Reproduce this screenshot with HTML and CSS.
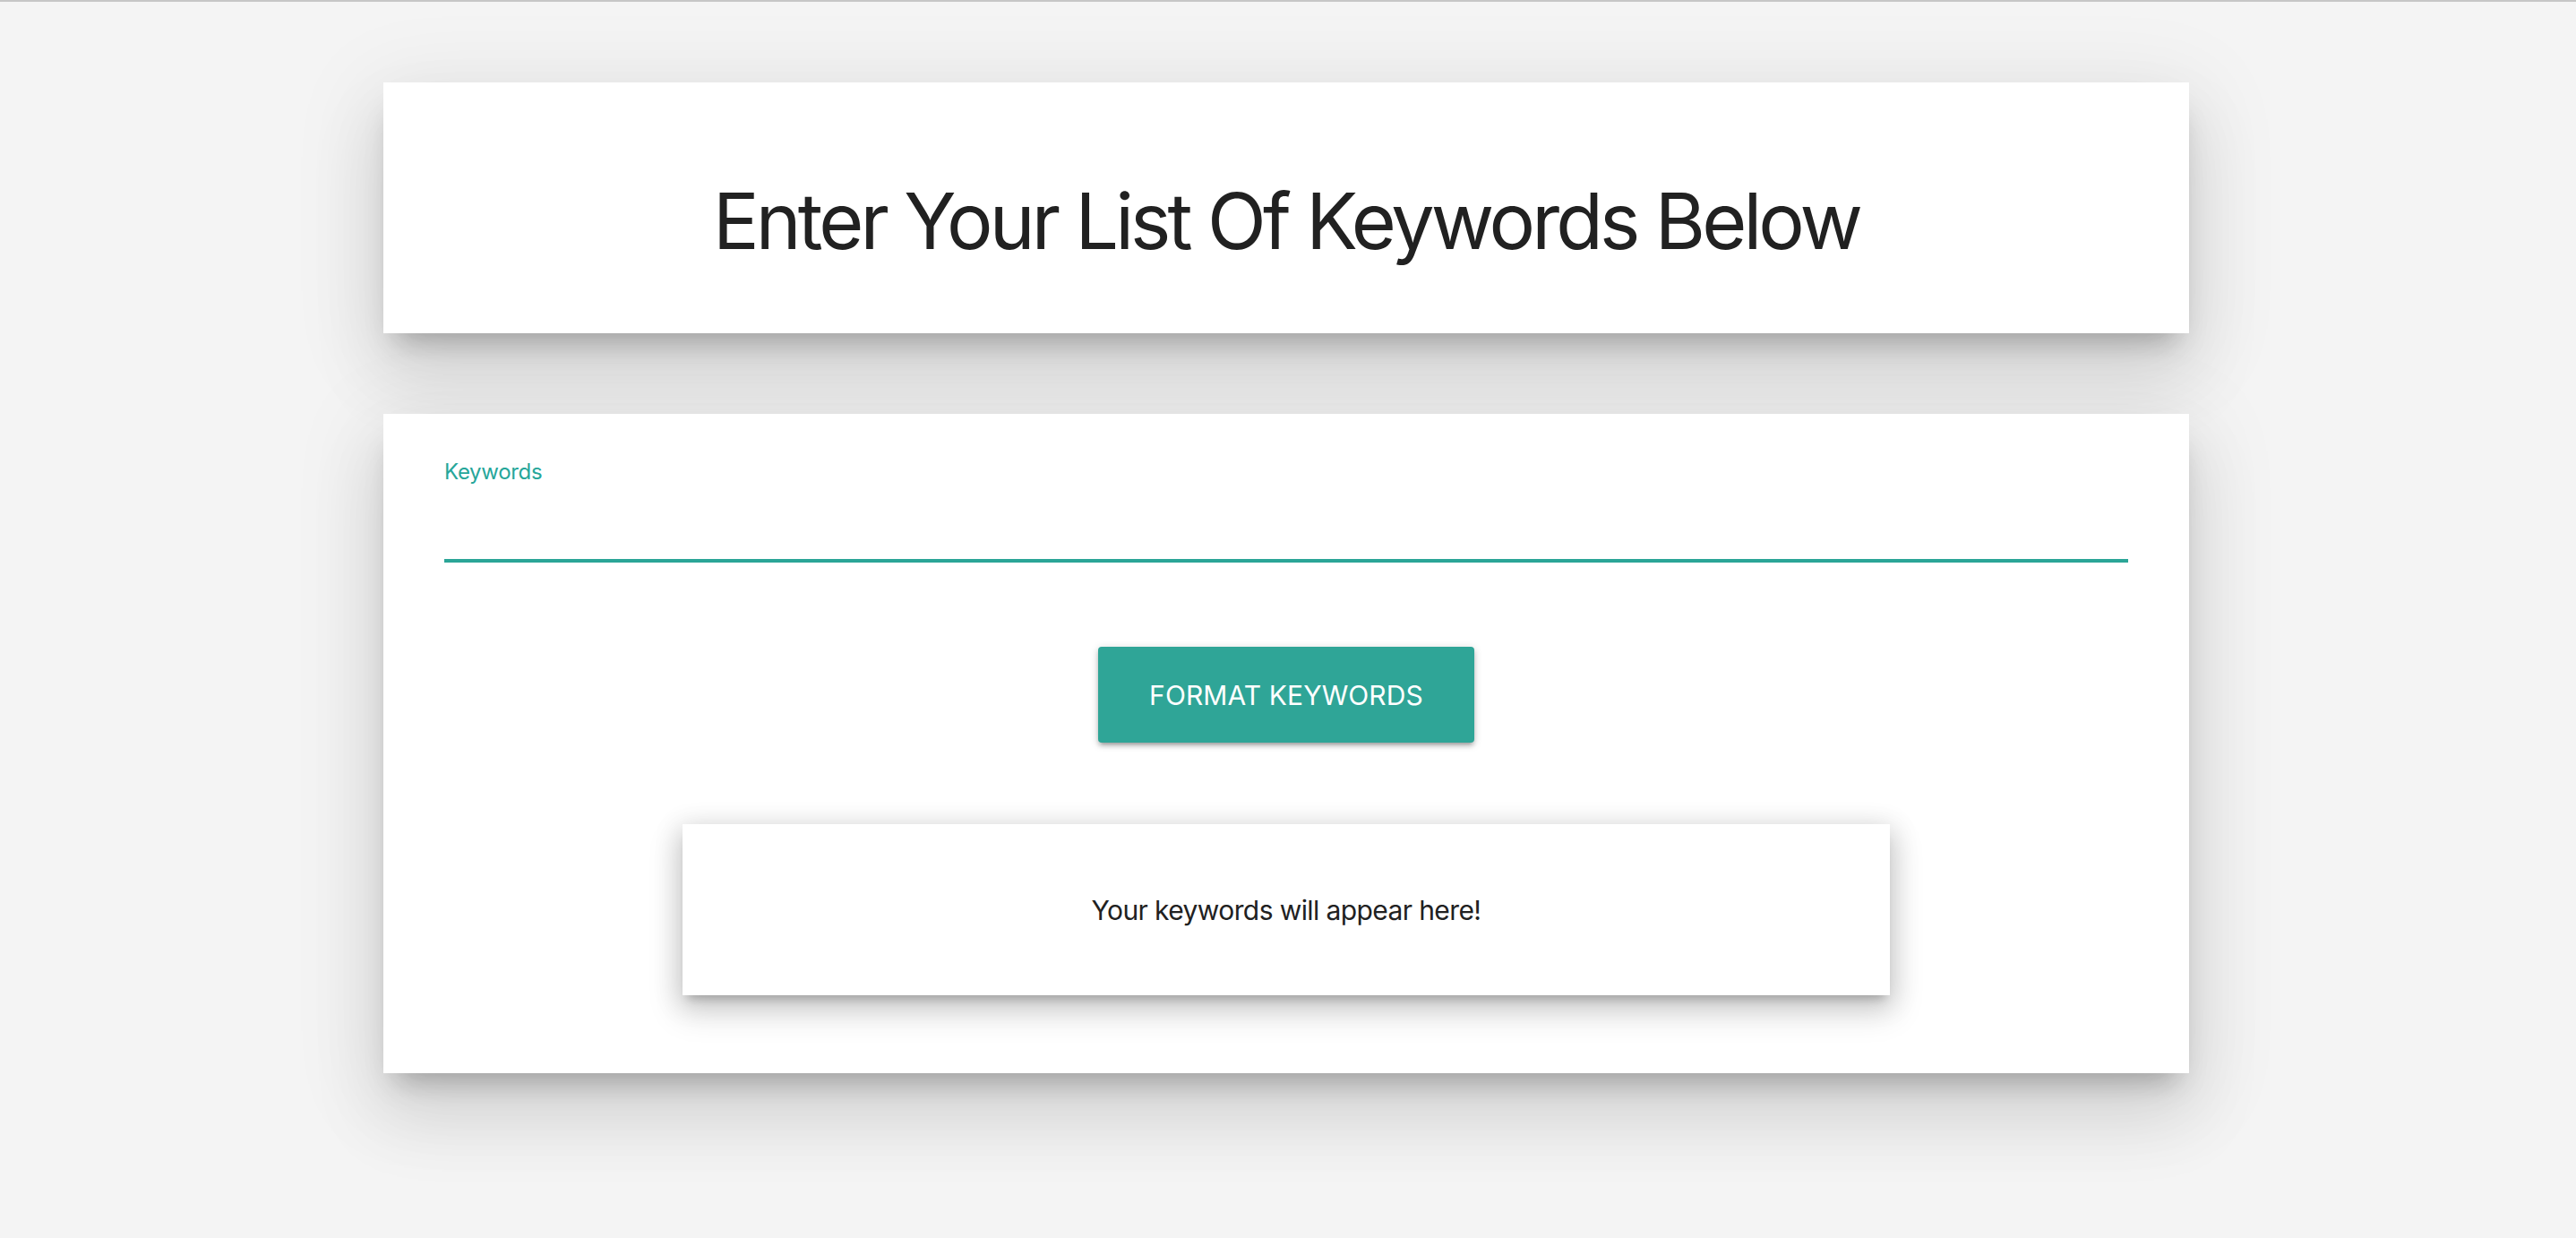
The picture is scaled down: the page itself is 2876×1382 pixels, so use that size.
FILE: index.html
```html
<!DOCTYPE html>
<html lang="en">
<head>
<meta charset="utf-8">
<title>Keyword Formatter</title>
<link rel="stylesheet" href="styles.css">
</head>
<body>
<div class="top-line"></div>
<main class="container">
  <section class="card title-card">
    <h1 class="title">Enter Your List Of Keywords Below</h1>
  </section>
  <section class="card form-card">
    <label class="field-label" for="keywords">Keywords</label>
    <div class="field-input" id="keywords"></div>
    <div class="actions">
      <button class="btn" type="button">Format Keywords</button>
    </div>
    <div class="output">
      <p class="output-text">Your keywords will appear here!</p>
    </div>
  </section>
</main>
</body>
</html>
```
FILE: styles.css
```css
html, body {
  margin: 0;
  padding: 0;
}
body {
  background: #f4f4f4;
  font-family: "Inter", "Helvetica Neue", "Liberation Sans", Arial, sans-serif;
  color: #212121;
  min-height: 1382px;
}
.top-line {
  height: 2px;
  background: #c6c6c6;
}
.container {
  width: 2016px;
  margin: 0 auto;
  padding-top: 90px;
  transform: translateX(-2px);
}
.card {
  background: #ffffff;
  box-shadow: 0 48px 76px 6px rgba(0,0,0,0.09),
              0 18px 92px 16px rgba(0,0,0,0.07),
              0 22px 30px -14px rgba(0,0,0,0.26);
}
.title-card {
  height: 280px;
  box-sizing: border-box;
  padding: 102px 0 72px;
}
.title {
  margin: 0;
  text-align: center;
  font-weight: 400;
  font-size: 86px;
  line-height: 106px;
  color: #212121;
  letter-spacing: -3.9px;
}
.form-card {
  margin-top: 90px;
  padding: 50px 68px 87px;
}
.field-label {
  display: block;
  font-size: 24px;
  line-height: 29px;
  color: #26a69a;
  letter-spacing: -0.3px;
}
.field-input {
  height: 83px;
  border-bottom: 4px solid #2ba597;
}
.actions {
  display: flex;
  justify-content: center;
  margin-top: 94px;
}
.btn {
  height: 107px;
  padding: 0 57px;
  border: none;
  border-radius: 4px;
  background: #2fa597;
  color: #ffffff;
  font-family: inherit;
  font-size: 30px;
  letter-spacing: 0.1px;
  text-transform: uppercase;
  box-shadow: 0 4px 4px 0 rgba(0,0,0,0.14),
              0 6px 2px -4px rgba(0,0,0,0.12),
              0 2px 10px 0 rgba(0,0,0,0.2);
}
.output {
  width: 1348px;
  height: 191px;
  margin: 91px auto 0;
  display: flex;
  align-items: center;
  justify-content: center;
  background: #ffffff;
  box-shadow: 0 16px 34px 4px rgba(0,0,0,0.14),
              0 6px 28px 4px rgba(0,0,0,0.12),
              0 10px 10px -6px rgba(0,0,0,0.2);
}
.output-text {
  margin: 0;
  font-size: 30px;
  line-height: 36px;
  color: #212121;
  letter-spacing: -0.6px;
}
```
